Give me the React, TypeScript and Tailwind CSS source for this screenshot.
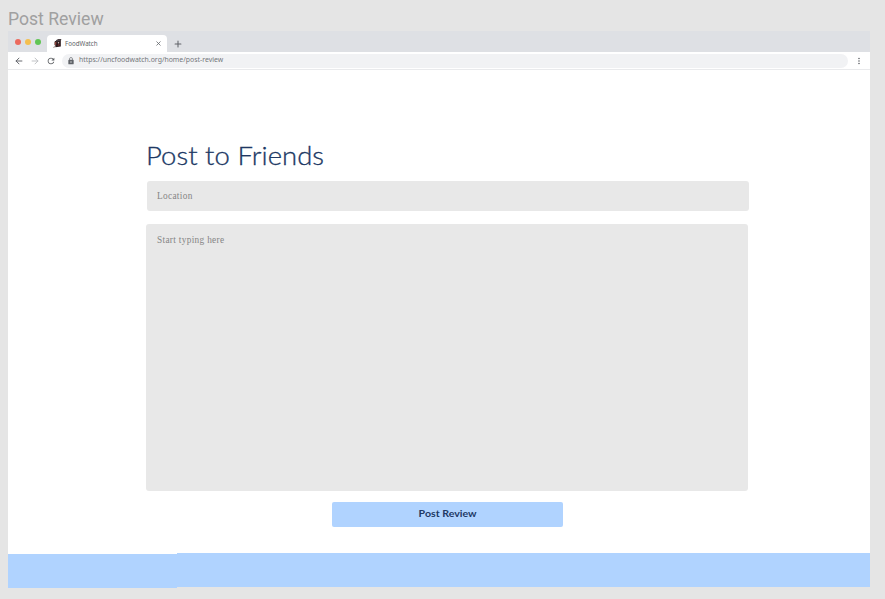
import { ArrowLeft, ArrowRight, Plus, X } from "lucide-react";
import { MdLock, MdMoreVert, MdRefresh } from "react-icons/md";

function FoodWatchIcon() {
  return (
    <svg viewBox="0 0 9 11" className="h-[11px] w-[9px] shrink-0">
      <path d="M2 3 7.8 2.6 7.8 8.6 2.4 9.2Z" fill="#2c1a1c" />
      <path d="M3 2.2 5.2.9 8.3 1 7.9 3.1 3 3.6Z" fill="#4a4044" />
      <path d="M1.6 3.6V7.2M.4 9.4 2.6 8.4" fill="none" stroke="#8a7672" strokeWidth=".9" />
      <path d="M2 4.2 3.4 4 3.2 6.6 2 7Z" fill="#94453c" />
      <path d="M5.2 6.3 6.7 5.9 6.4 7.4 4.6 7.9Z" fill="#722a2b" />
      <circle cx="5.5" cy="4.7" r=".7" fill="#d8c6c0" />
    </svg>
  );
}

function TabBar() {
  return (
    <div className="flex h-[21px] items-end bg-[#dee0e4]">
      <div className="flex h-[21px] w-[39px] items-center gap-1 pl-[7px]">
        <span className="size-1.5 rounded-full bg-[#ec6a5e]" />
        <span className="size-1.5 rounded-full bg-[#f4bf4f]" />
        <span className="size-1.5 rounded-full bg-[#61c554]" />
      </div>
      <div className="flex h-[17px] w-[120px] items-center rounded-t-[4px] bg-white pl-[6px] pr-[5px]">
        <FoodWatchIcon />
        <span className="ml-[3px] flex-1 pt-px text-[6.2px] leading-none text-[#606367]">FoodWatch</span>
        <X size={7} strokeWidth={2.7} color="#606368" />
      </div>
      <div className="flex h-[17px] items-center pl-[6px]">
        <Plus size={10} strokeWidth={2.5} color="#606368" />
      </div>
    </div>
  );
}

function Toolbar() {
  return (
    <div className="flex h-[18px] items-center border-b border-[#e9eaec] bg-white">
      <div className="flex w-[54px] items-center gap-[6px] pl-[6px]">
        <ArrowLeft size={10} strokeWidth={2.3} color="#606368" />
        <ArrowRight size={10} strokeWidth={2.3} color="#bdbfc2" />
        <MdRefresh size={10} color="#55585c" />
      </div>
      <div className="flex h-[14px] w-[786px] items-center rounded-full bg-[#f1f2f4] pl-[5px]">
        <MdLock size={8} color="#606368" />
        <span className="ml-[4px] text-[6.9px] leading-none text-[#74777b]">https://uncfoodwatch.org/home/post-review</span>
      </div>
      <MdMoreVert className="ml-[6px]" size={10} color="#606368" />
    </div>
  );
}

export default function App() {
  return (
    <div className="h-[599px] w-[885px] overflow-hidden bg-[#e5e5e5] px-2 font-['Noto_Sans',sans-serif]">
      <div className="flex h-[31px] items-center pt-[8px] font-['Roboto',sans-serif] text-[17.6px] leading-none text-[#a0a0a0]">
        Post Review
      </div>
      <main className="flex h-[557px] w-[862px] flex-col bg-white">
        <TabBar />
        <Toolbar />
        <form className="flex flex-1 flex-col pl-[138px] pt-[70px]" onSubmit={(e) => e.preventDefault()}>
          <h1 className="h-[41px] w-max origin-left scale-x-[1.12] whitespace-nowrap font-['Lato',sans-serif] text-[24.5px] font-light leading-[32px] tracking-[0.05px] text-[#203864] [-webkit-text-stroke:0.3px_#203864]">
            Post to Friends
          </h1>
          <input
            aria-label="Location"
            placeholder="Location"
            className="ml-px block h-[30px] w-[602px] rounded-[3px] bg-[#e8e8e8] px-[10px] font-['Liberation_Serif',serif] text-[9.3px] tracking-[0.32px] outline-none placeholder:text-[#858585]"
          />
          <textarea
            aria-label="Review"
            placeholder="Start typing here"
            className="mt-[13px] block h-[267px] w-[602px] resize-none rounded-[3px] bg-[#e8e8e8] px-[11px] py-[10px] font-['Liberation_Serif',serif] text-[9.3px] leading-[12px] tracking-[0.32px] outline-none placeholder:text-[#858585]"
          />
          <button className="ml-[186px] mt-[11px] h-[25px] w-[231px] rounded-[2px] bg-[#b0d3ff] pb-[2px] font-['Lato',sans-serif] text-[9px] font-bold text-[#203864]">
            <span className="inline-block scale-x-[1.18]">Post Review</span>
          </button>
        </form>
        <footer className="flex h-[35px] items-start bg-[#e5e5e5]">
          <div className="h-[35px] w-[169px] border-t border-white bg-[#b0d3ff]" />
          <div className="h-[34px] flex-1 bg-[#b0d3ff]" />
        </footer>
      </main>
    </div>
  );
}
